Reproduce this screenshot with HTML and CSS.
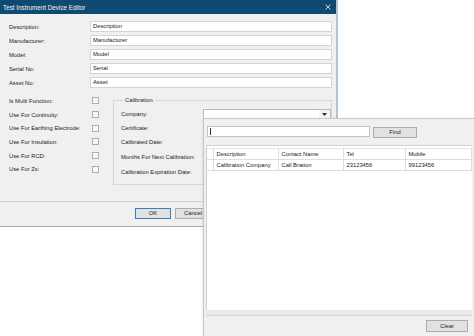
FILE: index.html
```html
<!DOCTYPE html>
<html>
<head>
<meta charset="utf-8">
<link rel="stylesheet" href="styles.css">
</head>
<body>
<div class="dlg">
  <div class="titlebar">
    <span class="title">Test Instrument Device Editor</span>
    <svg class="close" width="6" height="6" viewBox="0 0 6 6"><path d="M0.5 0.5L5.5 5.5M5.5 0.5L0.5 5.5" stroke="#dfe8ef" stroke-width="0.9"/></svg>
  </div>
  <div class="body">
    <div class="fields">
      <span class="lbl">Description:</span><div class="input">Description</div>
      <span class="lbl">Manufacturer:</span><div class="input">Manufacturer</div>
      <span class="lbl">Model:</span><div class="input">Model</div>
      <span class="lbl">Serial No:</span><div class="input">Serial</div>
      <span class="lbl">Asset No:</span><div class="input">Asset</div>
    </div>
    <div class="lower">
      <div class="checks">
        <span class="lbl">Is Multi Function:</span><span class="cb"></span>
        <span class="lbl">Use For Continuity:</span><span class="cb"></span>
        <span class="lbl">Use For Earthing Electrode:</span><span class="cb"></span>
        <span class="lbl">Use For Insulation:</span><span class="cb"></span>
        <span class="lbl">Use For RCD:</span><span class="cb"></span>
        <span class="lbl">Use For Zs:</span><span class="cb"></span>
      </div>
      <fieldset class="group">
        <legend>Calibration</legend>
        <div class="gfields">
          <span class="lbl">Company:</span>
          <div class="combo"><span class="combo-btn"><svg width="5" height="3" viewBox="0 0 5 3"><path d="M0 0H5L2.5 3Z" fill="#333"/></svg></span></div>
          <span class="lbl">Certificate:</span><span></span>
          <span class="lbl">Calibrated Date:</span><span></span>
          <span class="lbl">Months For Next Calibration:</span><span></span>
          <span class="lbl">Calibration Expiration Date:</span><span></span>
        </div>
      </fieldset>
    </div>
  </div>
  <div class="footer">
    <button class="btn btn-ok">OK</button>
    <button class="btn">Cancel</button>
  </div>
</div>

<div class="popup">
  <div class="search">
    <div class="finput"><span class="caret"></span></div>
    <button class="btn btn-find">Find</button>
  </div>
  <div class="grid">
    <div class="table">
      <div class="hc rh"></div>
      <div class="hc">Description</div>
      <div class="hc">Contact Name</div>
      <div class="hc">Tel</div>
      <div class="hc">Mobile</div>
      <div class="dc rh"></div>
      <div class="dc">Calibration Company</div>
      <div class="dc">Call Bration</div>
      <div class="dc">23123456</div>
      <div class="dc">99123456</div>
    </div>
  </div>
  <div class="strip"></div>
  <div class="pfooter">
    <button class="btn btn-clear">Clear</button>
  </div>
</div>
</body>
</html>
```
FILE: styles.css
```css
* { box-sizing: border-box; }
html, body {
  margin: 0;
  padding: 0;
  background: #ffffff;
  width: 474px;
  height: 336px;
  overflow: hidden;
}
body {
  position: relative;
  font-family: "Liberation Sans", Arial, sans-serif;
  font-size: 5.8px;
  color: #222;
}

.dlg {
  width: 338px;
  height: 227px;
  background: #f0f0f0;
  border-right: 2px solid #b3c3cf;
  border-bottom: 1px solid #a9a9a9;
  display: flex;
  flex-direction: column;
}
.titlebar {
  height: 14px;
  flex: 0 0 14px;
  background: #0f4a72;
  color: #f2f6f9;
  display: flex;
  align-items: center;
  justify-content: space-between;
  padding: 0 5px 0 3px;
  font-size: 6.3px;
}
.close { display: block; }

.body {
  padding: 7px 4px 0 9px;
  flex: 1 1 auto;
}
.lbl {
  white-space: nowrap;
  line-height: 8px;
}
.fields {
  display: grid;
  grid-template-columns: 81px 1fr;
  grid-auto-rows: 11px;
  row-gap: 3px;
  align-items: center;
}
.input {
  height: 11px;
  background: #fff;
  border: 1px solid #d4d4d4;
  padding-left: 2px;
  line-height: 9px;
  white-space: nowrap;
}

.lower {
  display: flex;
  margin-top: 6px;
}
.checks {
  width: 104px;
  flex: 0 0 104px;
  display: grid;
  grid-template-columns: 83px 7px;
  grid-auto-rows: 13.7px;
  align-items: center;
  align-content: start;
}
.cb {
  width: 7px;
  height: 7px;
  border: 1px solid #adadad;
  background: #f9f9f9;
}

.group {
  flex: 1 1 auto;
  margin: 0;
  padding: 0 0 5px 7px;
  border: 1px solid #d6d6d6;
  min-width: 0;
}
.group legend {
  padding: 0 2px;
  margin-left: 2px;
  line-height: 13.7px;
  height: 13.7px;
}
.gfields {
  display: grid;
  grid-template-columns: 82px 1fr;
  grid-template-rows: 13px 14px 15px 15px 14px;
  align-items: center;
}
.combo {
  height: 11px;
  background: #fff;
  border: 1px solid #b9b9b9;
  display: flex;
  justify-content: flex-end;
  align-items: stretch;
}
.combo-btn {
  width: 10px;
  display: flex;
  align-items: center;
  justify-content: center;
  background: #f4f4f4;
  margin-right: 1px;
}
.combo-btn svg { display: block; }

.footer {
  flex: 0 0 25px;
  border-top: 1px solid #d3d3d3;
  padding: 6px 0 0 135px;
  display: flex;
  gap: 4px;
  align-items: flex-start;
}
.btn {
  font-family: "Liberation Sans", Arial, sans-serif;
  font-size: 5.8px;
  color: #222;
  background: #e1e1e1;
  border: 1px solid #adadad;
  height: 11px;
  width: 36px;
  padding: 0;
  margin: 0;
  line-height: 9px;
  text-align: center;
}
.btn-ok {
  border-color: #3e7fb8;
}

.popup {
  position: absolute;
  left: 203px;
  top: 118px;
  width: 271px;
  height: 218px;
  background: #f0f0f0;
  border-left: 1px solid #c4c4c4;
  border-top: 1px solid #c8c8c8;
  display: flex;
  flex-direction: column;
  box-shadow: -1px 0 2px rgba(0,0,0,0.06);
}
.search {
  flex: 0 0 26px;
  display: flex;
  align-items: flex-start;
  padding: 7px 0 0 3px;
  gap: 3px;
}
.finput {
  width: 163px;
  height: 11px;
  background: #fff;
  border: 1px solid #c2c2c2;
  padding: 1px 0 0 2px;
}
.caret {
  display: block;
  width: 1px;
  height: 7px;
  background: #333;
}
.btn-find {
  width: 44px;
  height: 11px;
  margin-top: 1px;
}
.grid {
  flex: 0 0 165px;
  margin: 0 2px 0 2px;
  background: #fff;
  border-top: 1px solid #cfcfcf;
  border-left: 1px solid #cfcfcf;
  padding-top: 2px;
}
.table {
  display: grid;
  grid-template-columns: 7px 65px 65px 62px 1fr;
  grid-template-rows: 12px 11px;
}
.hc, .dc {
  padding-left: 2.5px;
  border-right: 1px solid #dedede;
  border-bottom: 1px solid #dedede;
  display: flex;
  align-items: center;
  white-space: nowrap;
  overflow: hidden;
}
.hc { border-top: 1px solid #e4e4e4; }
.rh { padding: 0; }
.strip {
  flex: 0 0 6px;
  margin: 0 2px;
  background: #eaeaea;
  border-bottom: 1px solid #d2d2d2;
}
.pfooter {
  flex: 1 1 auto;
  display: flex;
  justify-content: flex-end;
  align-items: flex-start;
  padding: 4px 6px 0 0;
}
.btn-clear {
  width: 42px;
  height: 12px;
  line-height: 10px;
}
```
